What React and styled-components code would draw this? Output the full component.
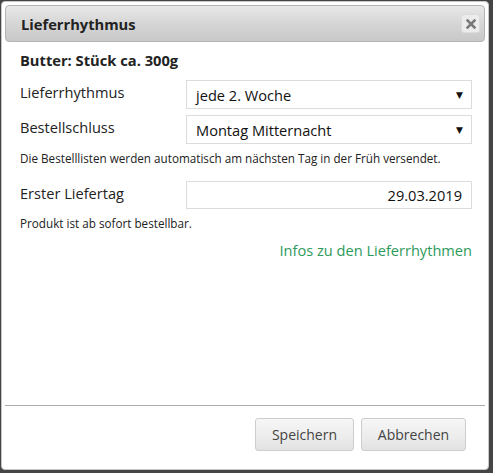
import React from 'react'
import styled, { createGlobalStyle } from 'styled-components'

const GlobalStyle = createGlobalStyle`
  html, body {
    margin: 0;
    padding: 0;
    background: #454545;
    font-family: "Open Sans", "DejaVu Sans", sans-serif;
    color: #222;
  }
`

const Dialog = styled.div`
  box-sizing: border-box;
  width: 488px;
  height: 469px;
  margin: 1px 0 0 1px;
  padding: 3px;
  background: #fff;
  border: 1px solid #c8c8c8;
  border-radius: 4px;
  display: flex;
  flex-direction: column;
`

const TitleBar = styled.div`
  box-sizing: border-box;
  height: 37px;
  display: flex;
  align-items: center;
  justify-content: space-between;
  padding: 0 4px 0 15px;
  border: 1px solid #b4b4b4;
  border-radius: 4px;
  background: linear-gradient(to bottom, #e8e8e8 0%, #d6d6d6 50%, #c8c8c8 100%);
`

const Title = styled.span`
  font-size: 14.7px;
  font-weight: 700;
  color: #222;
`

const CloseButton = styled.button`
  box-sizing: border-box;
  width: 19px;
  height: 19px;
  padding: 0;
  display: flex;
  align-items: center;
  justify-content: center;
  background: #ececec;
  border: 1px solid #dcdcdc;
  border-radius: 3px;
`

const Content = styled.div`
  flex: 1;
  padding: 8px 13px 0 15px;
  display: flex;
  flex-direction: column;
`

const Product = styled.div`
  font-size: 14.7px;
  font-weight: 700;
  line-height: 20px;
  margin-bottom: 10px;
`

const Row = styled.div`
  display: grid;
  grid-template-columns: 166px 1fr;
  align-items: center;
  margin-bottom: ${p => p.$mb || 0}px;
`

const Label = styled.label`
  font-size: 14.6px;
  color: #222;
  margin-top: -5px;
`

const Field = styled.div`
  box-sizing: border-box;
  height: ${p => p.$h || 29}px;
  border: 1px solid #dcdcdc;
  display: flex;
  align-items: center;
  justify-content: ${p => (p.$right ? 'flex-end' : 'space-between')};
  padding: 0 9px 0 9px;
  font-size: 14.6px;
  color: #111;
`

const Arrow = styled.span`
  font-size: 9px;
  color: #111;
  margin-right: -1px;
`

const Hint = styled.div`
  font-size: 11.7px;
  line-height: 16px;
  color: #222;
  margin-bottom: ${p => p.$mb || 0}px;
`

const InfoLink = styled.a`
  align-self: flex-end;
  font-size: 14.6px;
  color: #2e9a5c;
  text-decoration: none;
  margin-top: 9px;
`

const Footer = styled.div`
  border-top: 1px solid #acacac;
  padding: 12px 19px 15px 0;
  display: flex;
  justify-content: flex-end;
  gap: 7px;
`

const Button = styled.button`
  box-sizing: border-box;
  height: 33px;
  width: ${p => p.$w}px;
  font-family: "Open Sans", "DejaVu Sans", sans-serif;
  font-size: 14px;
  color: #444;
  background: linear-gradient(to bottom, #f6f6f6 0%, #ececec 60%, #e2e2e2 100%);
  border: 1px solid #cdcdcd;
  border-radius: 3px;
  padding: 0;
`

function CloseIcon() {
  return (
    <svg width="10" height="10" viewBox="0 0 10 10">
      <path d="M1.5 1.5 L8.5 8.5 M8.5 1.5 L1.5 8.5" stroke="#7a7a7a" strokeWidth="2.6" strokeLinecap="square" />
    </svg>
  )
}

export default function App() {
  return (
    <>
      <GlobalStyle />
      <Dialog>
        <TitleBar>
          <Title>Lieferrhythmus</Title>
          <CloseButton aria-label="close"><CloseIcon /></CloseButton>
        </TitleBar>
        <Content>
          <Product>Butter: Stück ca. 300g</Product>
          <Row $mb={6}>
            <Label>Lieferrhythmus</Label>
            <Field>jede 2. Woche<Arrow>▼</Arrow></Field>
          </Row>
          <Row $mb={6}>
            <Label>Bestellschluss</Label>
            <Field>Montag Mitternacht<Arrow>▼</Arrow></Field>
          </Row>
          <Hint $mb={15}>Die Bestelllisten werden automatisch am nächsten Tag in der Früh versendet.</Hint>
          <Row $mb={6}>
            <Label>Erster Liefertag</Label>
            <Field $h={28} $right>29.03.2019</Field>
          </Row>
          <Hint>Produkt ist ab sofort bestellbar.</Hint>
          <InfoLink href="#">Infos zu den Lieferrhythmen</InfoLink>
        </Content>
        <Footer>
          <Button $w={99}>Speichern</Button>
          <Button $w={105}>Abbrechen</Button>
        </Footer>
      </Dialog>
    </>
  )
}
